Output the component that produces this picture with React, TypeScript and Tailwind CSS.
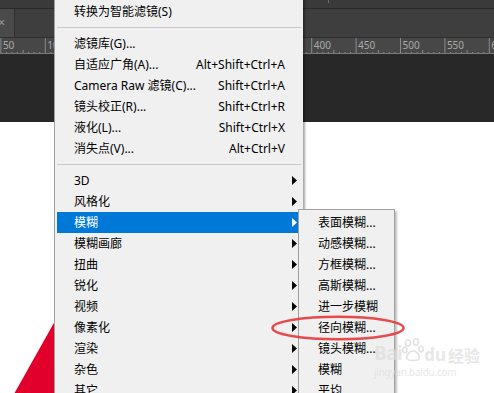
import React from 'react';

type Item = { label?: string; shortcut?: string; sub?: boolean; active?: boolean; sep?: boolean };

const mainItems: Item[] = [
  { label: '转换为智能滤镜(S)' },
  { sep: true },
  { label: '滤镜库(G)...' },
  { label: '自适应广角(A)...', shortcut: 'Alt+Shift+Ctrl+A' },
  { label: 'Camera Raw 滤镜(C)...', shortcut: 'Shift+Ctrl+A' },
  { label: '镜头校正(R)...', shortcut: 'Shift+Ctrl+R' },
  { label: '液化(L)...', shortcut: 'Shift+Ctrl+X' },
  { label: '消失点(V)...', shortcut: 'Alt+Ctrl+V' },
  { sep: true },
  { label: '3D', sub: true },
  { label: '风格化', sub: true },
  { label: '模糊', sub: true, active: true },
  { label: '模糊画廊', sub: true },
  { label: '扭曲', sub: true },
  { label: '锐化', sub: true },
  { label: '视频', sub: true },
  { label: '像素化', sub: true },
  { label: '渲染', sub: true },
  { label: '杂色', sub: true },
  { label: '其它', sub: true },
];

const blurItems = ['表面模糊...', '动感模糊...', '方框模糊...', '高斯模糊...', '进一步模糊', '径向模糊...', '镜头模糊...', '模糊', '平均'];

const font = { fontFamily: '"Noto Sans", "Noto Sans CJK SC", sans-serif' };

// only the labels that peek out beside the menu
const rulerLabels = [1, 2, 8, 9, 10, 11, 12];

function Ruler() {
  const majors = Array.from({ length: 13 }, (_, i) => i);
  return (
    <svg width="494" height="16" className="block">
      <rect width="494" height="16" fill="#474747" />
      {majors.map((k) => {
        const x = 0.9 + 44.4 * (k - 1);
        return (
          <g key={k}>
            <line x1={x} y1="0" x2={x} y2="16" stroke="#8a8a8a" strokeWidth="1" />
            {Array.from({ length: 7 }, (_, j) => {
              const mx = x + 5.55 * (j + 1);
              const h = j === 3 ? 4 : 2;
              return <line key={j} x1={mx} y1={16 - h} x2={mx} y2="16" stroke="#8a8a8a" strokeWidth="1" />;
            })}
          </g>
        );
      })}
      {rulerLabels.map((k) => (
        <text key={k} x={2.9 + 44.4 * (k - 1)} y="11" fontSize="10" fill="#a9a9a9" fontFamily='"Noto Sans", sans-serif'>
          {k === 12 ? '6' : k * 50}
        </text>
      ))}
      <line x1="0" y1="15.5" x2="494" y2="15.5" stroke="#7a7a7a" />
    </svg>
  );
}

function Arrow({ white }: { white?: boolean }) {
  return (
    <svg width="5" height="9" viewBox="0 0 5 9" className="absolute right-[4px] top-[6px]">
      <path d="M0 0 L5 4.5 L0 9 Z" fill={white ? '#ffffff' : '#000000'} />
    </svg>
  );
}

function MainMenu() {
  return (
    <div
      className="absolute left-[54px] top-0 w-[249px] h-[410px] bg-[#f0f0f0] border-l border-[#a0a0a0] pt-[1px] shadow-[2px_0_2px_rgba(0,0,0,0.35)] text-[12px] text-black"
      style={font}
    >
      {mainItems.map((it, i) =>
        it.sep ? (
          <div key={i} className="h-[11px] flex items-center mx-[2px]">
            <div className="h-px w-full bg-[#c9c9c9]" />
          </div>
        ) : (
          <div
            key={i}
            className={`relative mx-[2px] h-[21px] flex items-center pl-[17px] pr-[16px] leading-none ${it.active ? 'bg-[#0078d7] text-white' : ''}`}
          >
            <span className="flex-1 whitespace-nowrap">{it.label}</span>
            {it.shortcut && <span className="whitespace-nowrap">{it.shortcut}</span>}
            {it.sub && <Arrow white={it.active} />}
          </div>
        )
      )}
    </div>
  );
}

function SubMenu() {
  return (
    <div
      className="absolute left-[298px] top-[209px] w-[97px] h-[200px] bg-[#f0f0f0] border border-[#a0a0a0] pt-[2px] shadow-[2px_2px_2px_rgba(0,0,0,0.25)] text-[12px] text-black"
      style={font}
    >
      {blurItems.map((t) => (
        <div key={t} className="h-[21px] flex items-center pl-[19px] leading-none whitespace-nowrap">
          {t}
        </div>
      ))}
    </div>
  );
}

function Watermark() {
  return (
    <div className="absolute left-[374px] top-[338px] opacity-70 pointer-events-none" style={font}>
      <div className="flex items-end text-[#dedede]">
        <span className="text-[19px] font-bold leading-none tracking-tight">Bai</span>
        <svg width="22" height="24" viewBox="0 0 22 24" className="mb-[1px]">
          <g fill="none" stroke="#d6d6d6" strokeWidth="1.6">
            <ellipse cx="6" cy="5" rx="2.5" ry="3.2" />
            <ellipse cx="14" cy="4" rx="2.5" ry="3.2" />
            <ellipse cx="2.8" cy="12" rx="2.2" ry="2.8" />
            <ellipse cx="19" cy="11" rx="2.2" ry="2.8" />
            <path d="M5 21 C4 16 8 13 11 13 C14 13 18 16 17 21 C16 23 6 23 5 21 Z" />
          </g>
        </svg>
        <span className="text-[17px] font-bold leading-none">du</span>
        <span className="text-[16px] font-bold leading-none ml-[2px]" style={{ fontFamily: '"Noto Sans CJK SC", sans-serif' }}>
          经验
        </span>
      </div>
      <div className="text-[10px] leading-none mt-[4px] text-[#dedede] tracking-tight">jingyan.baidu.com</div>
    </div>
  );
}

export default function App() {
  return (
    <div className="relative w-[494px] h-[393px] overflow-hidden bg-white">
      {/* top strip */}
      <div className="relative h-[8px] bg-[#3a3a3a]">
        <div className="absolute left-[328px] top-0 w-px h-[3px] bg-[#6a6a6a]" />
      </div>
      <div className="h-px bg-[#2a2a2a]" />
      {/* tab bar */}
      <div className="flex h-[28px] bg-[#3e3e3e]">
        <div className="w-[14px] h-full bg-[#4a4a4a] flex items-center justify-end pr-[9px] text-[#9a9a9a] text-[12px] leading-none" style={font}>
          ×
        </div>
        <div className="w-px h-full bg-[#2e2e2e]" />
      </div>
      <div className="h-px bg-[#2e2e2e]" />
      <Ruler />
      {/* dark workspace */}
      <div className="h-[68px] bg-[#282828]" />
      {/* white canvas */}
      <div className="relative h-[272px] bg-white">
        <svg width="60" height="272" className="absolute left-0 top-0">
          <polygon points="55,199 55,272 14,272" fill="#e1002b" />
        </svg>
      </div>

      <MainMenu />
      <SubMenu />

      <svg width="140" height="30" className="absolute left-[268px] top-[313px]">
        <ellipse cx="70" cy="15" rx="65.5" ry="11.3" fill="none" stroke="#e6373a" strokeWidth="2.6" opacity="0.9" />
      </svg>

      <Watermark />
    </div>
  );
}
